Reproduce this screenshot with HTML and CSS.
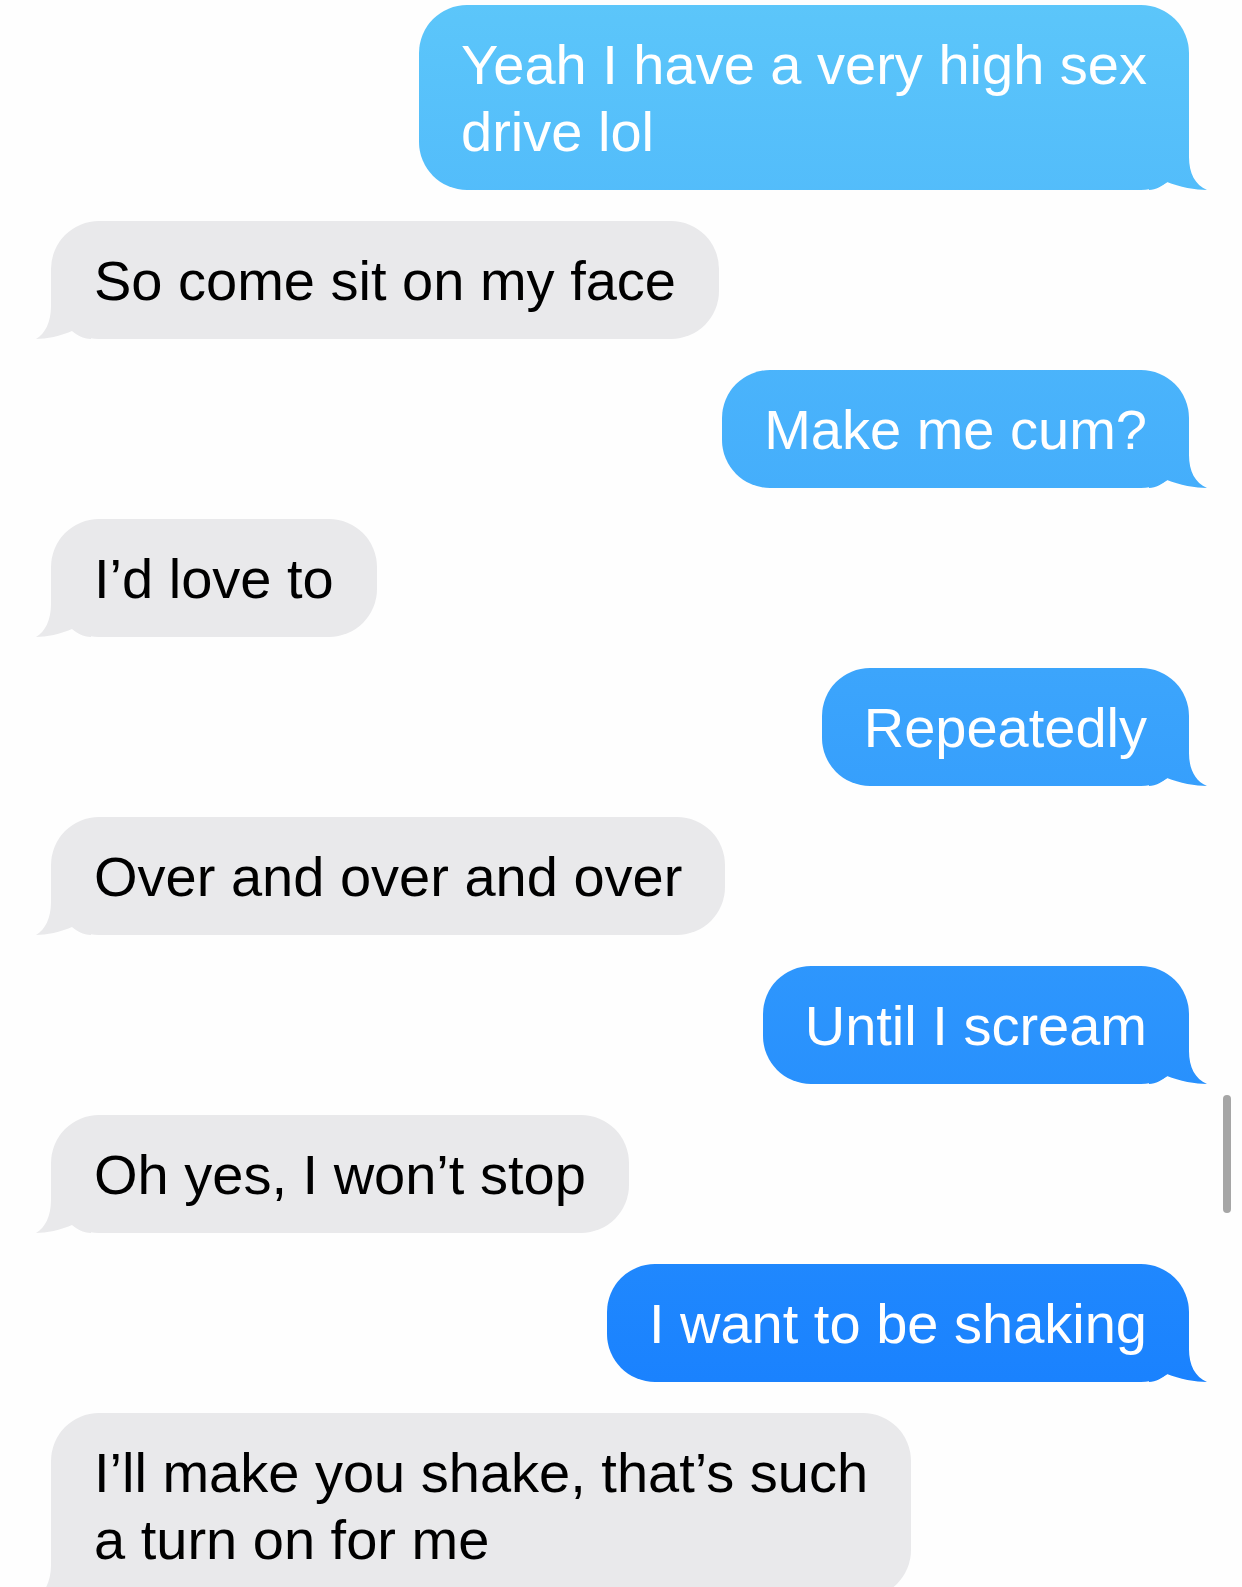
FILE: index.html
```html
<!DOCTYPE html>
<html lang="en">
<head>
<meta charset="utf-8">
<title>Messages</title>
<link rel="stylesheet" href="styles.css">
</head>
<body>
<main class="thread">
  <div class="bubble sent"><span class="line">Yeah I have a very high sex</span><span class="line">drive lol</span></div>
  <div class="bubble received">So come sit on my face</div>
  <div class="bubble sent">Make me cum?</div>
  <div class="bubble received">I’d love to</div>
  <div class="bubble sent">Repeatedly</div>
  <div class="bubble received">Over and over and over</div>
  <div class="bubble sent">Until I scream</div>
  <div class="bubble received">Oh yes, I won’t stop</div>
  <div class="bubble sent">I want to be shaking</div>
  <div class="bubble received"><span class="line">I’ll make you shake, that’s such</span><span class="line">a turn on for me</span></div>
</main>
<div class="scrollbar"></div>
</body>
</html>
```
FILE: styles.css
```css
html, body {
  margin: 0;
  padding: 0;
  height: 100%;
  overflow: hidden;
  background: #fefefe;
}

.thread {
  display: flex;
  flex-direction: column;
  gap: 31px;
  padding-top: 5px;
  font-family: "Liberation Sans", Arial, sans-serif;
  font-size: 56px;
  line-height: 67px;
}

.bubble {
  position: relative;
  box-sizing: border-box;
  width: fit-content;
  padding: 26px 42px 25px;
  border-radius: 48px;
  white-space: nowrap;
}

.line {
  display: block;
}

.sent {
  align-self: flex-end;
  margin-right: 53px;
  color: #ffffff;
  background: linear-gradient(180deg, #5cc6fa 0px, #1a82fe 1380px) fixed;
}

.received {
  align-self: flex-start;
  margin-left: 51px;
  padding-left: 43px;
  padding-right: 43px;
  color: #000000;
  background: #e9e9eb;
}

.bubble::after {
  content: "";
  position: absolute;
  bottom: 0;
  height: 50px;
}

.sent::after {
  right: -18px;
  width: 58px;
  background: linear-gradient(180deg, #5cc6fa 0px, #1a82fe 1380px) fixed;
  clip-path: path("M 0 0 H 40 V 17 C 40 33, 46 45, 58 50 C 47 50, 30 47, 18 42 C 13 46, 7 50, 0 50 Z");
}

.received::after {
  left: -15px;
  width: 55px;
  background: #e9e9eb;
  clip-path: path("M 55 0 H 15 V 17 C 15 33, 9 45, 0 50 C 10 50, 25 47, 36 42 C 41 46, 47 50, 55 50 Z");
}

.scrollbar {
  position: fixed;
  top: 1095px;
  right: 11px;
  width: 8px;
  height: 118px;
  border-radius: 4px;
  background: #a6a6a6;
}
```
